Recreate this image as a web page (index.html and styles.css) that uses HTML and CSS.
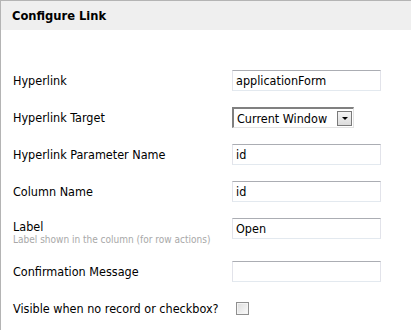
FILE: index.html
```html
<!DOCTYPE html>
<html>
<head>
<meta charset="utf-8">
<link rel="stylesheet" href="styles.css">
</head>
<body>
<div class="panel">
  <div class="header">Configure Link</div>
  <div class="form">
    <div class="row">
      <div class="label">Hyperlink</div>
      <input class="text" type="text" value="applicationForm">
    </div>
    <div class="row">
      <div class="label">Hyperlink Target</div>
      <div class="select"><span class="sel-text">Current Window</span><span class="sel-btn"><span class="tri"></span></span></div>
    </div>
    <div class="row">
      <div class="label">Hyperlink Parameter Name</div>
      <input class="text" type="text" value="id">
    </div>
    <div class="row">
      <div class="label">Column Name</div>
      <input class="text" type="text" value="id">
    </div>
    <div class="row row-tall">
      <div class="label">Label<div class="hint">Label shown in the column (for row actions)</div></div>
      <input class="text" type="text" value="Open">
    </div>
    <div class="row">
      <div class="label">Confirmation Message</div>
      <input class="text" type="text" value="">
    </div>
    <div class="row">
      <div class="label">Visible when no record or checkbox?</div>
      <span class="check"></span>
    </div>
  </div>
</div>
</body>
</html>
```
FILE: styles.css
```css
html, body {
  margin: 0;
  padding: 0;
  background: #fff;
}
body {
  font-family: "DejaVu Sans Condensed", "DejaVu Sans", sans-serif;
  font-size: 12.5px;
  color: #000;
}
.panel {
  border-top: 1px solid #b4b4b4;
  border-left: 1px solid #b4b4b4;
  height: 330px;
  box-sizing: border-box;
}
.header {
  height: 29px;
  background: #efefef;
  font-weight: bold;
  font-size: 12.8px;
  display: flex;
  align-items: center;
  padding-left: 11px;
  padding-bottom: 1px;
  box-sizing: border-box;
}
.form {
  padding-top: 32px;
  padding-left: 12px;
}
.row {
  display: grid;
  grid-template-columns: 219px auto;
  align-items: center;
  height: 37px;
}
.row-tall {
  height: 43px;
  align-items: start;
}
.row-tall .label {
  padding-top: 9px;
}
.row-tall .text {
  margin-top: 8px;
}
.hint {
  font-size: 10px;
  color: #a8a8a8;
  margin-top: 0;
}
.text {
  width: 149px;
  height: 21px;
  box-sizing: border-box;
  margin: 0;
  padding: 0 3px;
  font: inherit;
  font-size: 12.5px;
  color: #000;
  border: 1px solid #e2e3ea;
  border-top-color: #abadb3;
  border-bottom-color: #e3e9ef;
  outline: none;
  background: #fff;
}
.select {
  width: 122px;
  height: 21px;
  box-sizing: border-box;
  border-top: 2px solid #808080;
  border-left: 2px solid #808080;
  border-right: 1px solid #e3e3e3;
  border-bottom: 1px solid #e3e3e3;
  display: flex;
  align-items: center;
  justify-content: space-between;
  background: #fff;
}
.sel-text {
  padding-left: 3px;
  white-space: nowrap;
}
.sel-btn {
  width: 15px;
  height: 15px;
  box-sizing: border-box;
  margin-right: 1px;
  border: 1px solid #7a7a7a;
  background: linear-gradient(#f4f4f4, #dcdcdc);
  display: flex;
  align-items: center;
  justify-content: center;
}
.tri {
  width: 0;
  height: 0;
  border-left: 3px solid transparent;
  border-right: 3px solid transparent;
  border-top: 3px solid #000;
}
.check {
  display: block;
  width: 13px;
  height: 13px;
  box-sizing: border-box;
  margin-left: 4px;
  border: 1px solid #8f8f8f;
  background: linear-gradient(135deg, #dcdcdc, #fbfbfb);
  box-shadow: inset 0 0 0 1px #f4f4f4;
}
```
